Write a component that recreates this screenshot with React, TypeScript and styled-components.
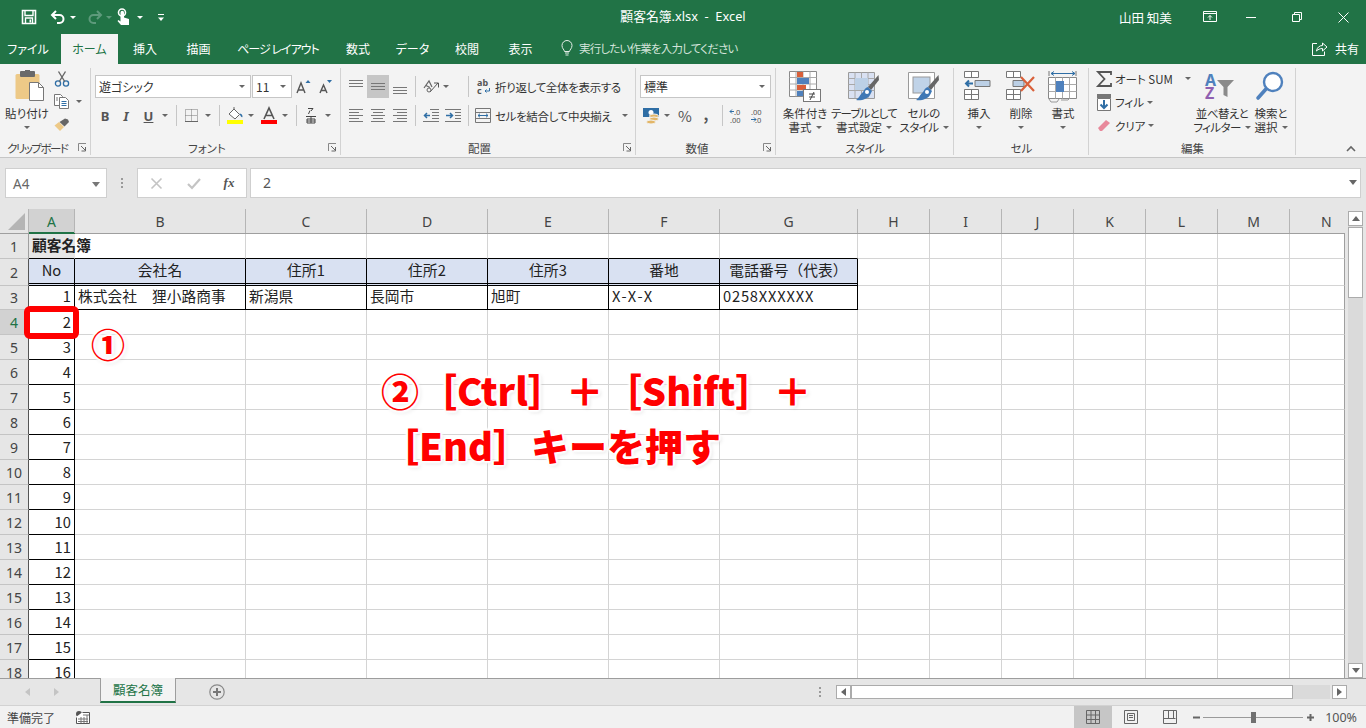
import React from 'react';
import styled, { createGlobalStyle } from 'styled-components';

const GlobalStyle = createGlobalStyle`
  html, body { margin: 0; padding: 0; height: 100%; overflow: hidden; }
  body { font-family: "Noto Sans", "Noto Sans CJK JP", sans-serif; }
  svg { display: block; overflow: visible; }
`;

const GREEN = '#217346';
const UI_FONT = '"Noto Sans CJK JP", "Noto Sans", sans-serif';

const Root = styled.div`
  position: relative;
  width: 1366px;
  height: 728px;
  display: flex;
  flex-direction: column;
  background: #e6e6e6;
  overflow: hidden;
  font-family: ${UI_FONT};
`;

/* ---------- title bar ---------- */
const TitleBar = styled.header`
  height: 34px;
  flex: none;
  background: ${GREEN};
  color: #fff;
  display: flex;
  align-items: center;
  position: relative;
`;

const QuickAccess = styled.div`
  display: flex;
  align-items: center;
  padding-left: 20px;
`;

const Title = styled.div`
  position: absolute;
  left: 0;
  right: 0;
  top: 7px;
  text-align: center;
  font-size: 12.8px;
  line-height: 18px;
  font-family: "Noto Sans", "Noto Sans CJK JP", sans-serif;
  white-space: pre;
`;

const WindowControls = styled.div`
  margin-left: auto;
  display: flex;
  align-items: center;
`;

const UserName = styled.span`
  font-size: 12.5px;
  width: 64px;
  margin-right: 9px;
  white-space: pre;
`;

const Slot = styled.span<{ $w: number; $on?: boolean; $h?: number; $ml?: number }>`
  flex: none;
  width: ${p => p.$w}px;
  height: ${p => p.$h ?? 23}px;
  margin-left: ${p => p.$ml ?? 0}px;
  display: inline-flex;
  align-items: center;
  justify-content: center;
  background: ${p => (p.$on ? '#c6c6c6' : 'transparent')};
`;

const Caret = styled.i<{ $c?: string }>`
  display: inline-block;
  width: 0;
  height: 0;
  border-left: 3px solid transparent;
  border-right: 3px solid transparent;
  border-top: 3px solid ${p => p.$c ?? '#666'};
  flex: none;
`;

const VSep = styled.span<{ $l?: number; $r?: number }>`
  flex: none;
  width: 1px;
  height: 21px;
  background: #c6c6c6;
  margin: 0 ${p => p.$r ?? 5}px 0 ${p => p.$l ?? 5}px;
`;

// squeezes the proportional kana to the narrower widths of the Windows UI font
const Squeeze = styled.span<{ $t: number }>`
  letter-spacing: ${p => p.$t}px;
  white-space: nowrap;
`;

/* ---------- tabs ---------- */
const TabBar = styled.nav`
  height: 30px;
  flex: none;
  background: ${GREEN};
  display: flex;
  align-items: stretch;
  color: #fff;
  font-size: 12px;
  font-feature-settings: "palt";
`;

const Tab = styled.div<{ $w: number; $active?: boolean }>`
  width: ${p => p.$w}px;
  flex: none;
  box-sizing: border-box;
  display: flex;
  align-items: center;
  justify-content: center;
  padding-bottom: 2px;
  background: ${p => (p.$active ? '#f3f3f3' : 'transparent')};
  color: ${p => (p.$active ? GREEN : '#fff')};
`;

const FileTab = styled(Tab)`
  padding-right: 5px;
`;

const TellMe = styled.div`
  display: flex;
  align-items: center;
  gap: 6px;
  margin-left: 14px;
  padding-bottom: 2px;
  color: #d3e3da;
  font-size: 11.5px;
  letter-spacing: -0.8px;
`;

const Share = styled.div`
  margin-left: auto;
  display: flex;
  align-items: center;
  gap: 7px;
  padding-right: 7px;
  padding-bottom: 2px;
`;

/* ---------- ribbon ---------- */
const Ribbon = styled.section`
  height: 93px;
  flex: none;
  background: #f3f3f3;
  border-bottom: 1px solid #c6c6c6;
  display: flex;
  position: relative;
  font-size: 11.5px;
  color: #333;
  font-feature-settings: "palt";
`;

const Group = styled.div<{ $w: number }>`
  width: ${p => p.$w}px;
  flex: none;
  display: flex;
  flex-direction: column;
  position: relative;
  &::after {
    content: '';
    position: absolute;
    right: 0;
    top: 4px;
    bottom: 2px;
    width: 1px;
    background: #d2d2d2;
  }
`;

const GroupBody = styled.div<{ $pl?: number; $pt?: number }>`
  height: 73px;
  padding-left: ${p => p.$pl ?? 0}px;
  padding-top: ${p => p.$pt ?? 0}px;
  box-sizing: border-box;
  display: flex;
`;

const GroupLabel = styled.div<{ $pr?: number; $pl?: number; $left?: boolean }>`
  height: 20px;
  line-height: 22px;
  text-align: ${p => (p.$left ? 'left' : 'center')};
  padding-right: ${p => p.$pr ?? 0}px;
  padding-left: ${p => p.$pl ?? 0}px;
  font-size: 11.5px;
  color: #444;
  position: relative;
`;

const Launcher = styled.span`
  position: absolute;
  right: 4px;
  top: 6px;
`;

const Stack = styled.div<{ $gap?: number; $w?: number; $pt?: number }>`
  display: flex;
  flex-direction: column;
  gap: ${p => p.$gap ?? 6}px;
  padding-top: ${p => p.$pt ?? 0}px;
  ${p => (p.$w ? `width: ${p.$w}px; flex: none;` : '')}
`;

const Row = styled.div<{ $gap?: number }>`
  display: flex;
  align-items: center;
  height: 23px;
  gap: ${p => p.$gap ?? 0}px;
`;

const TextCombo = styled.div<{ $w: number; $ml?: number }>`
  width: ${p => p.$w}px;
  height: 23px;
  margin-left: ${p => p.$ml ?? 0}px;
  box-sizing: border-box;
  flex: none;
  background: #fff;
  border: 1px solid #c6c6c6;
  display: flex;
  align-items: center;
  justify-content: space-between;
  padding: 0 5px 0 3px;
  font-size: 12px;
  color: #333;
`;

const LargeButton = styled.div<{ $w: number; $mt?: number }>`
  width: ${p => p.$w}px;
  flex: none;
  display: flex;
  flex-direction: column;
  align-items: center;
  padding-top: 6px;
  margin-top: ${p => p.$mt ?? 0}px;
  line-height: 14px;
  white-space: nowrap;
  & > svg { margin-bottom: 4px; }
`;

const LabelCaret = styled.span`
  display: inline-flex;
  align-items: center;
  gap: 4px;
  height: 14px;
`;

const WrapLabel = styled.span<{ $ml: number }>`
  margin-left: ${p => p.$ml}px;
  white-space: nowrap;
  letter-spacing: -0.33px;
`;

const ToolText = styled.span`
  white-space: nowrap;
  font-size: 11.5px;
`;

const FormatLetter = styled.span<{ $italic?: boolean; $under?: boolean }>`
  font-family: "Noto Sans", sans-serif;
  font-size: 13px;
  font-weight: 700;
  color: #555;
  font-style: ${p => (p.$italic ? 'italic' : 'normal')};
  text-decoration: ${p => (p.$under ? 'underline' : 'none')};
`;

const NumberMark = styled.span<{ $up?: boolean }>`
  font-size: 15px;
  color: #555;
  font-weight: ${p => (p.$up ? 700 : 400)};
  margin-top: ${p => (p.$up ? -4 : 0)}px;
`;

const Collapse = styled.span`
  position: absolute;
  right: 10px;
  bottom: 5px;
`;

/* ---------- formula bar ---------- */
const FormulaBar = styled.div`
  height: 30px;
  flex: none;
  padding: 10px 5px 11px;
  display: flex;
  align-items: stretch;
  color: #555;
`;

const NameBox = styled.div`
  width: 102px;
  box-sizing: border-box;
  background: #fff;
  border: 1px solid #cfcfcf;
  display: flex;
  align-items: center;
  justify-content: space-between;
  padding: 2px 6px 0 7px;
  font-size: 13.5px;
  color: #666;
  font-family: "Noto Sans", sans-serif;
`;

const Grip = styled.div`
  width: 30px;
  display: flex;
  flex-direction: column;
  align-items: center;
  justify-content: center;
  gap: 2px;
  & > i { width: 2px; height: 2px; background: #9a9a9a; display: block; }
`;

const FormulaButtons = styled.div`
  width: 110px;
  box-sizing: border-box;
  background: #fff;
  border: 1px solid #cfcfcf;
  display: flex;
  align-items: center;
`;

const FormulaInput = styled.div`
  flex: 1;
  margin-left: 3px;
  box-sizing: border-box;
  background: #fff;
  border: 1px solid #cfcfcf;
  display: flex;
  align-items: center;
  justify-content: space-between;
  padding: 0 3px 2px 12px;
  font-size: 14px;
  color: #555;
  font-family: "Noto Sans", sans-serif;
`;

/* ---------- sheet ---------- */
const SheetArea = styled.div`
  flex: 1;
  min-height: 0;
  display: flex;
  border-bottom: 1px solid #9d9d9d;
`;

const SheetGrid = styled.div`
  width: 1345px;
  flex: none;
  overflow: hidden;
  display: flex;
  flex-direction: column;
`;

const ColumnHeaderRow = styled.div`
  height: 25px;
  flex: none;
  display: flex;
  background: #e6e6e6;
  border-bottom: 1px solid #9f9f9f;
  box-sizing: border-box;
`;

const Corner = styled.div`
  width: 29px;
  flex: none;
  box-sizing: border-box;
  border-right: 1px solid #b5b5b5;
  display: flex;
  align-items: flex-end;
  justify-content: flex-end;
  padding: 0 3px 3px 0;
`;

const ColumnHead = styled.div<{ $w: number; $sel?: boolean; $cut?: boolean }>`
  width: ${p => p.$w}px;
  flex: none;
  box-sizing: border-box;
  border-right: ${p => (p.$cut ? '0' : '1px solid #b5b5b5')};
  display: flex;
  align-items: center;
  justify-content: ${p => (p.$cut ? 'flex-start' : 'center')};
  padding-left: ${p => (p.$cut ? 31 : 0)}px;
  font-family: "Noto Sans", sans-serif;
  font-size: 14px;
  color: ${p => (p.$sel ? GREEN : '#444')};
  background: ${p => (p.$sel ? '#d2d2d2' : 'transparent')};
  box-shadow: ${p => (p.$sel ? `inset 0 -1px 0 ${GREEN}, 0 1px 0 ${GREEN}` : 'none')};
`;

const SheetRow = styled.div<{ $h: number }>`
  height: ${p => p.$h}px;
  flex: none;
  display: flex;
`;

const RowHead = styled.div<{ $sel?: boolean; $dark?: boolean }>`
  width: 29px;
  flex: none;
  box-sizing: border-box;
  background: ${p => (p.$sel ? '#d2d2d2' : '#e6e6e6')};
  border-right: 1px solid ${p => (p.$dark ? '#555' : '#9f9f9f')};
  border-bottom: 1px solid #c4c4c4;
  color: ${p => (p.$sel ? GREEN : '#444')};
  display: flex;
  align-items: center;
  justify-content: center;
  font-family: "Noto Sans", sans-serif;
  font-size: 14px;
`;

const Cell = styled.div<{
  $w: number;
  $align?: string;
  $title?: boolean;
  $fill?: boolean;
  $edge?: 'black' | 'head';
  $frame?: boolean;
  $blackBottom?: boolean;
  $track?: number;
  $pb?: number;
}>`
  width: ${p => p.$w}px;
  flex: none;
  box-sizing: border-box;
  padding: 0 3px ${p => p.$pb ?? 1}px 3px;
  display: flex;
  align-items: center;
  justify-content: ${p => p.$align ?? 'flex-start'};
  white-space: nowrap;
  font-family: "Noto Sans CJK JP", sans-serif;
  font-size: 14.7px;
  letter-spacing: ${p => p.$track ?? 0.1}px;
  font-weight: ${p => (p.$title ? 700 : 400)};
  color: #222;
  position: ${p => (p.$title ? 'relative' : 'static')};
  z-index: ${p => (p.$title ? 1 : 'auto')};
  background: ${p => (p.$title ? 'transparent' : p.$fill ? '#d9e1f2' : '#fff')};
  border-right: 1px solid ${p => {
    if (p.$title) return 'transparent';
    if (p.$edge) return '#000';
    return p.$frame ? '#9f9f9f' : '#d4d4d4';
  }};
  border-bottom: ${p =>
    p.$edge === 'head'
      ? '3px double #000'
      : p.$edge === 'black' || p.$blackBottom
        ? '1px solid #000'
        : '1px solid #d4d4d4'};
`;

const VScroll = styled.div`
  width: 15px;
  margin-left: 3px;
  padding-top: 2px;
  display: flex;
  flex-direction: column;
  background: #e6e6e6;
`;

const VTrack = styled.div`
  flex: 1;
  background: #dadada;
  padding-top: 1px;
`;

const ScrollButton = styled.div<{ $h?: number; $ml?: number }>`
  width: 15px;
  height: ${p => p.$h ?? 15}px;
  margin-left: ${p => p.$ml ?? 0}px;
  flex: none;
  box-sizing: border-box;
  background: #fff;
  border: 1px solid #ababab;
  display: flex;
  align-items: center;
  justify-content: center;
`;

const VThumb = styled.div`
  height: 71px;
  box-sizing: border-box;
  background: #fff;
  border: 1px solid #ababab;
`;

/* ---------- sheet tabs ---------- */
const SheetTabs = styled.div`
  height: 27px;
  flex: none;
  display: flex;
  align-items: flex-start;
  background: #e6e6e6;
  border-bottom: 1px solid #d2d2d2;
  box-sizing: border-box;
`;

const TabNav = styled.div`
  width: 100px;
  height: 25px;
  flex: none;
  display: flex;
  align-items: center;
  padding-left: 25px;
  gap: 24px;
  box-sizing: border-box;
`;

const SheetTab = styled.div`
  width: 76px;
  height: 25px;
  margin-top: -1px;
  flex: none;
  box-sizing: border-box;
  background: #f3f3f3;
  border-left: 1px solid #9d9d9d;
  border-right: 1px solid #9d9d9d;
  border-bottom: 2px solid ${GREEN};
  color: ${GREEN};
  font-size: 12.5px;
  display: flex;
  align-items: center;
  justify-content: center;
`;

const AddSheet = styled.div`
  margin-left: 33px;
  height: 25px;
  display: flex;
  align-items: center;
`;

const HScrollWrap = styled.div`
  margin-left: auto;
  margin-right: 19px;
  height: 25px;
  display: flex;
  align-items: center;
`;

const HGrip = styled(Grip)`
  width: 16px;
  margin-right: 8px;
`;

const HTrack = styled.div`
  width: 479px;
  height: 14px;
  background: #dadada;
  display: flex;
`;

const HThumb = styled.div`
  width: 442px;
  box-sizing: border-box;
  background: #fff;
  border: 1px solid #ababab;
`;

/* ---------- status bar ---------- */
const StatusBar = styled.footer`
  height: 22px;
  flex: none;
  background: #f1f1f1;
  display: flex;
  align-items: center;
  font-size: 12px;
  color: #444;
  padding-left: 7px;
`;

const StatusRight = styled.div`
  margin-left: auto;
  height: 22px;
  display: flex;
  align-items: center;
`;

const ViewButton = styled.div<{ $on?: boolean }>`
  width: 38.5px;
  height: 22px;
  display: flex;
  align-items: center;
  justify-content: center;
  background: ${p => (p.$on ? '#c6c6c6' : 'transparent')};
`;

const ZoomSlider = styled.div`
  width: 100px;
  height: 1px;
  background: #9a9a9a;
  position: relative;
`;

const ZoomThumb = styled.span`
  position: absolute;
  left: 48px;
  top: -5px;
  width: 5px;
  height: 11px;
  background: #707070;
`;

const ZoomText = styled.span`
  font-family: "Noto Sans", sans-serif;
  font-size: 12.5px;
  color: #555;
  width: 49px;
  text-align: right;
  padding-right: 9px;
  box-sizing: border-box;
`;

/* ---------- annotations over the sheet ---------- */
const Marker = styled.div`
  position: absolute;
  left: 24px;
  top: 306px;
  width: 55px;
  height: 33px;
  box-sizing: border-box;
  border: 6px solid #ff0000;
  border-radius: 6px;
`;

const halo = `
  0 0 4px #fff, 0 0 4px #fff, 1px 1px 2px #fff, -1px -1px 2px #fff, 2px 0 2px #fff,
  -2px 0 2px #fff, 0 2px 2px #fff, 0 -2px 2px #fff, 2px 2px 4px rgba(0,0,0,.15)
`;

const Callout = styled.div<{ $x: number; $y: number; $size: number }>`
  position: absolute;
  left: ${p => p.$x}px;
  top: ${p => p.$y}px;
  font-family: "Noto Sans CJK JP", sans-serif;
  font-weight: 900;
  font-size: ${p => p.$size}px;
  line-height: 1.2;
  color: #ff0000;
  white-space: pre;
  text-shadow: ${halo};
`;

/* ---------- icons ---------- */
const Svg: React.FC<{ w?: number; h?: number; children: React.ReactNode }> = ({ w = 16, h, children }) => (
  <svg width={w} height={h ?? w} viewBox={`0 0 ${w} ${h ?? w}`} fill="none">{children}</svg>
);

const SaveIcon = () => (
  <Svg>
    <path d="M1.5 1.5h13v13h-13z" stroke="#fff" strokeWidth="1.6" />
    <path d="M4 2v4.5h8V2" stroke="#fff" strokeWidth="1.4" />
    <path d="M4.5 14v-5h7v5" stroke="#fff" strokeWidth="1.4" />
    <rect x="8.5" y="10.5" width="1.6" height="3" fill="#fff" />
  </Svg>
);
const UndoIcon = () => (
  <Svg>
    <path d="M6 2 2 6l4 4" stroke="#fff" strokeWidth="2" />
    <path d="M3 6h6.5a4 4 0 0 1 0 8H7" stroke="#fff" strokeWidth="2" />
  </Svg>
);
const RedoIcon = () => (
  <Svg>
    <path d="M10 2l4 4-4 4" stroke="#5d9a7b" strokeWidth="2" />
    <path d="M13 6H6.5a4 4 0 0 0 0 8H9" stroke="#5d9a7b" strokeWidth="2" />
  </Svg>
);
const TouchIcon = () => (
  <Svg w={16} h={18}>
    <circle cx="6" cy="4.5" r="3.5" stroke="#fff" strokeWidth="1.6" />
    <path d="M4.5 4.5v9l-2-1.5-1 1 3.5 4h8v-6l-5-1.5V4.5a1.2 1.2 0 0 0-3.5 0z" fill="#fff" />
  </Svg>
);
const CustomizeIcon = () => (
  <Svg w={8} h={9}>
    <path d="M1 1.5h6" stroke="#fff" />
    <path d="M1 4.5h6L4 8z" fill="#fff" />
  </Svg>
);
const RibbonDisplayIcon = () => (
  <Svg w={14} h={12}>
    <path d="M.5.5h13v10H.5z" stroke="#fff" />
    <path d="M1 2.5h12" stroke="#fff" />
    <path d="M7 9V4.5M5 6.5l2-2 2 2" stroke="#fff" />
  </Svg>
);
const MinIcon = () => <Svg w={10} h={10}><path d="M0 5.5h10" stroke="#fff" /></Svg>;
const RestoreIcon = () => (
  <Svg w={10} h={10}>
    <path d="M.5 2.5h7v7h-7z" stroke="#fff" />
    <path d="M2.5 2.5v-2h7v7h-2" stroke="#fff" />
  </Svg>
);
const CloseIcon = () => <Svg w={11} h={11}><path d="M.5.5l10 10M10.5.5l-10 10" stroke="#fff" /></Svg>;
const BulbIcon = () => (
  <Svg w={12} h={16}>
    <path d="M3.5 11.5C3.2 9.5 1 8.5 1 5.5a5 5 0 0 1 10 0c0 3-2.2 4-2.5 6z" stroke="#e6efe9" />
    <path d="M4 13h4M4.5 15h3" stroke="#e6efe9" />
  </Svg>
);
const ShareIcon = () => (
  <Svg w={16} h={15}>
    <path d="M5 2.5H.5v12h12v-4" stroke="#fff" />
    <path d="M4.5 10c.5-3.5 3-5.5 6-5.5V2l4.5 4-4.5 4V7.5c-2.5 0-4.5 1-6 2.5z" stroke="#fff" />
  </Svg>
);

const PasteIcon = () => (
  <Svg w={36} h={32}>
    <g transform="translate(6 0)">
      <rect x="0.5" y="4" width="24" height="25" rx="1.5" fill="#edc987" />
      <rect x="5" y="1" width="15" height="6" rx="1" fill="#6a6a6a" />
      <rect x="10" y="0" width="5" height="3" fill="#6a6a6a" />
      <path d="M14.5 12.5h9l5 5v13h-14z" fill="#fff" stroke="#777" />
      <path d="M23.5 12.5v5h5" stroke="#777" />
    </g>
  </Svg>
);
const CutIcon = () => (
  <Svg w={16} h={16}>
    <circle cx="4" cy="12.5" r="2.6" stroke="#2f6ea5" strokeWidth="1.3" />
    <circle cx="12" cy="12.5" r="2.6" stroke="#2f6ea5" strokeWidth="1.3" />
    <path d="M5.3 10.5 11.5.5M10.7 10.5 4.5.5" stroke="#666" strokeWidth="1.4" />
  </Svg>
);
const CopyIcon = () => (
  <Svg w={16} h={15}>
    <path d="M.5.5h6l2 2v9h-8z" fill="#fff" stroke="#777" />
    <path d="M5.5 3.5h6l3 3v8h-9z" fill="#fff" stroke="#777" />
    <path d="M7.5 7.5h5M7.5 9.5h5M7.5 11.5h5" stroke="#2f6ea5" />
    <path d="M2 4h2M2 6h2" stroke="#777" />
  </Svg>
);
const BrushIcon = () => (
  <Svg w={16} h={15}>
    <path d="M.5 8.5 6 14l4-4-5-5z" fill="#edc987" />
    <path d="M5.5 5 11 1.5l3 1L15 5l-4.5 4.5z" fill="#666" />
  </Svg>
);
const GrowIcon = ({ up }: { up?: boolean }) => (
  <Svg w={up ? 15 : 13} h={14}>
    <path d={up ? 'M1 13 5 3l4 10M2.5 10h5' : 'M1 13 4.5 5 8 13M2.3 10.5h4.4'} stroke="#555" strokeWidth="1.4" />
    {up ? <path d="M9.5 3l2.5-3 2.5 3z" fill="#2f6ea5" /> : <path d="M8 0h5l-2.5 3z" fill="#2f6ea5" />}
  </Svg>
);
const BorderIcon = () => (
  <Svg w={13} h={13}>
    <path d="M.5.5h12v12H.5zM6.5.5v12M.5 6.5h12" stroke="#777" strokeDasharray="1 1" />
    <path d="M0 12.5h13" stroke="#666" />
  </Svg>
);
const FillIcon = () => (
  <Svg w={17} h={17}>
    <path d="M2 7l5-5 5.5 5.5-4.5 4.5z" fill="#fff" stroke="#666" />
    <path d="M7 2V0" stroke="#666" />
    <path d="M12.5 6.5c1.5 0 3 1 3 3s-2 0-3-3z" fill="#2f6ea5" />
    <rect x="0" y="13" width="16" height="4" fill="#ffff00" />
  </Svg>
);
const FontColorIcon = () => (
  <Svg w={16} h={17}>
    <path d="M3 12 8 1l5 11M4.8 8.5h6.4" stroke="#555" strokeWidth="1.6" />
    <rect x="0" y="13" width="16" height="4" fill="#ff0000" />
  </Svg>
);
const PhoneticIcon = () => (
  <Svg w={12} h={17}>
    <path d="M3 1.5h5L6 4M5 3.5 3.5 7" stroke="#444" />
    <path d="M1 9.5h10M2 12h8v4H2zM6 9.5v6.5M2 14h8" stroke="#444" />
  </Svg>
);
const Lines = ({ xs, y0 = 0 }: { xs: [number, number][]; y0?: number }) => (
  <Svg w={15} h={14}>
    {xs.map(([a, b], i) => (
      <path key={i} d={`M${a} ${y0 + i * 3 + 0.5}H${b}`} stroke="#777" />
    ))}
  </Svg>
);
const OrientIcon = () => (
  <Svg w={17} h={15}>
    <path d="M1 9l5-7 3 6M3 6.5l4 2" stroke="#666" strokeWidth="1.2" />
    <path d="M7 13 15 4" stroke="#555" />
    <path d="M11 4h4.5v4.5" stroke="#555" />
    <circle cx="6" cy="11" r="2" stroke="#666" />
  </Svg>
);
const IndentIcon = ({ out }: { out?: boolean }) => (
  <Svg w={16} h={13}>
    <path d={out ? 'M7 .5h9M9 3.5h7M9 6.5h7M9 9.5h7M0 12.5h16' : 'M0 .5h16M10 3.5h6M10 6.5h6M10 9.5h6M0 12.5h16'} stroke="#777" />
    {out
      ? <path d="M7 6.5H2M4 4 1.5 6.5 4 9" stroke="#2f6ea5" strokeWidth="1.5" />
      : <path d="M1 6.5h6M5 4l2.5 2.5L5 9" stroke="#2f6ea5" strokeWidth="1.5" />}
  </Svg>
);
const WrapIcon = () => (
  <Svg w={14} h={15}>
    <text x="0" y="7" fontSize="9" fontWeight="700" fill="#555" fontFamily="Noto Sans">ab</text>
    <text x="0" y="15" fontSize="9" fontWeight="700" fill="#555" fontFamily="Noto Sans">c</text>
    <path d="M12.5 9v3H8M9.5 10.5 8 12l1.5 1.5" stroke="#2f6ea5" />
  </Svg>
);
const MergeIcon = () => (
  <Svg w={16} h={15}>
    <path d="M.5.5h15v14H.5zM.5 4.5h15M.5 10.5h15" stroke="#777" />
    <path d="M3 7.5h10M5 5.7 3 7.5l2 1.8M11 5.7l2 1.8-2 1.8" stroke="#2f6ea5" />
  </Svg>
);
const CurrencyIcon = () => (
  <Svg w={17} h={17}>
    <rect x="0" y="1" width="16" height="9" fill="#2f6ea5" />
    <circle cx="8" cy="5.5" r="2.5" fill="#fff" />
    <ellipse cx="11" cy="9" rx="4.5" ry="2" fill="#e3b667" stroke="#f3f3f3" />
    <ellipse cx="11" cy="12" rx="4.5" ry="2" fill="#e3b667" stroke="#f3f3f3" />
    <ellipse cx="8" cy="15" rx="4.5" ry="2" fill="#e3b667" stroke="#f3f3f3" />
  </Svg>
);
const DecimalIcon = ({ more }: { more?: boolean }) => (
  <Svg w={17} h={15}>
    <text x={more ? 5 : 1} y="6.5" fontSize="7.5" fill="#555" fontFamily="Noto Sans">{more ? '.0' : '.00'}</text>
    <text x={more ? 1 : 5} y="14.5" fontSize="7.5" fill="#555" fontFamily="Noto Sans">{more ? '.00' : '.0'}</text>
    {more
      ? <path d="M5 3.5H1M3 1.5l-2 2 2 2" stroke="#2f6ea5" />
      : <path d="M1 11.5h5M4 9.5l2 2-2 2" stroke="#2f6ea5" />}
  </Svg>
);
const CondFormatIcon = () => (
  <Svg w={32} h={32}>
    <path d="M.5 1.5h27v25H.5z" fill="#fff" stroke="#8a8a8a" />
    <path d="M7 1.5v25M14 1.5v25M21 1.5v25M.5 7.5h27M.5 14h27M.5 20h27" stroke="#aaa" />
    <rect x="8" y="2" width="6" height="5" fill="#d9603a" />
    <rect x="8" y="8" width="12" height="6" fill="#4f81bd" />
    <rect x="8" y="15" width="9" height="5" fill="#d9603a" />
    <rect x="8" y="21" width="6" height="5" fill="#4f81bd" />
    <rect x="14.5" y="19.5" width="17" height="12" fill="#fff" stroke="#777" />
    <path d="M20 24h6M20 27h6M25 22l-4 8" stroke="#444" />
  </Svg>
);
const TableFormatIcon = ({ single }: { single?: boolean }) => (
  <Svg w={32} h={32}>
    <path d="M.5 2.5h26v26H.5z" fill="#fff" stroke="#9a9a9a" />
    {single ? (
      <rect x="5" y="7" width="17" height="16" fill="#c0d3e8" stroke="#9a9a9a" />
    ) : (
      <>
        <rect x="1" y="3" width="25" height="25" fill="#d9e1f2" />
        <path d="M7 2.5v26M13.5 2.5v26M20 2.5v26M.5 8.5h26M.5 14.5h26M.5 20.5h26" stroke="#a8a8a8" />
        <rect x="7" y="8" width="13" height="12" fill="#bcd0e6" />
      </>
    )}
    <path d="M30.5 5 20 17l3 3 8-10z" fill="#666" />
    <path d="M20 17c-4 1-4 5-6 6-2 2-4 6-6 7 5 1 12-1 14-5l2-4z" fill="#3f78b5" />
    <circle cx="19" cy="22" r="2" fill="#fff" />
  </Svg>
);
const CellsIcon = ({ kind }: { kind: 'ins' | 'del' | 'fmt' }) => {
  if (kind === 'fmt') {
    return (
      <Svg w={30} h={32}>
        <path d="M1 1v5M28 1v5" stroke="#777" />
        <path d="M3 3.5h24M6 1.5 3 3.5l3 2M24 1.5l3 2-3 2" stroke="#2f6ea5" />
        <path d="M.5 7.5h28v21H.5z" fill="#fff" stroke="#888" />
        <path d="M7.5 7.5v21M14.5 7.5v21M21.5 7.5v21M.5 14.5h28M.5 21.5h28" stroke="#aaa" />
        <rect x="8" y="11" width="8" height="11" fill="#4f81bd" />
        <path d="M1 29l2 3h6l2-3M13 30h7l2-2" stroke="#999" />
      </Svg>
    );
  }
  const del = kind === 'del';
  return (
    <Svg w={30} h={32}>
      <path d="M.5 1.5h14v6H.5zM7.5 1.5v6M.5 19.5h14v10H.5zM7.5 19.5v10M.5 24.5h14" stroke="#777" fill="#fff" />
      <path d={del ? 'M7 10.5h11v6H7z' : 'M11 10.5h15v6H11z'} stroke="#777" fill="#bcd0e6" />
      {del ? (
        <path d="M15 7l13 14M28 7 15 21" stroke="#d9603a" strokeWidth="2.2" />
      ) : (
        <path d="M9 13.5H2M5 10.5l-3 3 3 3" stroke="#2f6ea5" strokeWidth="2" />
      )}
    </Svg>
  );
};
const SigmaIcon = () => (
  <Svg w={16} h={16}>
    <path d="M15 4V1H2l6.5 7L2 15h13v-3" stroke="#555" strokeWidth="1.8" />
  </Svg>
);
const FillDownIcon = () => (
  <Svg w={15} h={17}>
    <path d="M.5 4.5h13v12H.5z" fill="#fff" stroke="#777" />
    <rect x="0" y="0" width="14" height="4" fill="#777" />
    <path d="M7 6v8M3.5 10.5 7 14l3.5-3.5" stroke="#2f6ea5" strokeWidth="2" />
  </Svg>
);
const EraserIcon = () => (
  <Svg w={14} h={13}>
    <path d="M1 9l8-8 4 3-8 8H3z" fill="#e8899b" />
  </Svg>
);
const SortIcon = () => (
  <Svg w={30} h={32}>
    <text x="-2" y="16" fontSize="16" fontWeight="700" fill="#4f81bd" fontFamily="Noto Sans">A</text>
    <text x="-2" y="29" fontSize="16" fontWeight="700" fill="#8f5fb0" fontFamily="Noto Sans">Z</text>
    <path d="M10 10h17l-6.5 7v10l-4-2v-8z" fill="#8a8a8a" />
  </Svg>
);
const FindIcon = () => (
  <Svg w={30} h={32}>
    <circle cx="17" cy="12" r="9" fill="#fff" stroke="#4f81bd" strokeWidth="2.4" />
    <path d="M10 19 2 28" stroke="#4f81bd" strokeWidth="3.6" strokeLinecap="round" />
  </Svg>
);
const LauncherIcon = () => (
  <Svg w={9} h={9}>
    <path d="M.5 8V.5H8" stroke="#888" />
    <path d="M3 3l4 4M7.5 4v4h-4" stroke="#666" />
  </Svg>
);
const CollapseIcon = () => <Svg w={10} h={6}><path d="M1 5l4-4 4 4" stroke="#666" strokeWidth="1.6" /></Svg>;
const CornerTriangle = () => <Svg w={17} h={17}><path d="M17 0v17H0z" fill="#b5b5b5" /></Svg>;
const PlusCircle = () => (
  <Svg w={16} h={16}>
    <circle cx="8" cy="8" r="7.2" stroke="#8a8a8a" strokeWidth="1.2" />
    <path d="M8 4v8M4 8h8" stroke="#777" strokeWidth="2" />
  </Svg>
);
const Tri = ({ dir, c = '#777', s = 5 }: { dir: 'l' | 'r' | 'u' | 'd'; c?: string; s?: number }) => {
  const d = { l: 'M0 4 5 0v8z', r: 'M5 4 0 0v8z', u: 'M4 0 8 5H0z', d: 'M4 5 0 0h8z' }[dir];
  const horiz = dir === 'l' || dir === 'r';
  return <svg width={horiz ? s : 8} height={horiz ? 8 : s} viewBox={horiz ? '0 0 5 8' : '0 0 8 5'}><path d={d} fill={c} /></svg>;
};
const MacroIcon = () => (
  <Svg w={14} h={13}>
    <circle cx="3" cy="3" r="3" fill="#555" />
    <path d="M6 1.5h8V13H0V6" fill="#fff" />
    <path d="M6.5 1.5h7v11H.5v-6" stroke="#555" />
    <path d="M2 8h10M2 10.5h10M5 6v6M8 6v6M11 4v8M7 4h6" stroke="#777" />
  </Svg>
);
const NormalView = () => (
  <Svg w={14} h={14}>
    <path d="M.5.5h13v13H.5zM5 .5v13M9.5.5v13M.5 5h13M.5 9.5h13" stroke="#666" />
  </Svg>
);
const PageView = () => (
  <Svg w={14} h={14}>
    <path d="M.5.5h13v13H.5z" stroke="#666" />
    <path d="M3.5 3.5h7v7h-7zM5 5.5h4M5 7.5h4" stroke="#666" />
  </Svg>
);
const BreakView = () => (
  <Svg w={14} h={14}>
    <path d="M.5.5h13v13H.5zM.5 8.5h12M5.5.5v8M10.5.5v8" stroke="#666" />
  </Svg>
);
const SmallSign = ({ plus }: { plus?: boolean }) => (
  <Svg w={7} h={7}>
    <path d={plus ? 'M0 3.5h7M3.5 0v7' : 'M0 3.5h7'} stroke="#666" strokeWidth="2" />
  </Svg>
);
const CrossMark = () => <Svg w={11} h={11}><path d="M.5.5l10 10M10.5.5l-10 10" stroke="#c4c4c4" strokeWidth="1.6" /></Svg>;
const CheckMark = () => <Svg w={14} h={11}><path d="M1 6l4 4 8-9" stroke="#c4c4c4" strokeWidth="2.2" /></Svg>;
const FxMark = styled.span`
  font-family: "Liberation Serif", serif;
  font-style: italic;
  font-weight: 700;
  font-size: 13px;
  color: #555;
`;

/* ---------- sheet data ---------- */
const COLUMNS: [string, number][] = [
  ['A', 46], ['B', 171], ['C', 121], ['D', 121], ['E', 121], ['F', 111], ['G', 138],
  ['H', 72], ['I', 72], ['J', 72], ['K', 72], ['L', 72], ['M', 72], ['N', 55],
];

const HEADINGS = ['No', '会社名', '住所1', '住所2', '住所3', '番地', '電話番号（代表）'];
const FIRST_ROW = ['1', '株式会社　狸小路商事', '新潟県', '長岡市', '旭町', 'X-X-X', '0258XXXXXX'];
const LATIN_TRACK: Record<number, number> = { 5: 1.6, 6: 0.8 };

const rowHeight = (r: number) => (r === 2 ? 27 : r === 3 ? 24 : 25);

const renderCell = (r: number, c: number, w: number) => {
  const inTable = c < 7;
  const frame = c === COLUMNS.length - 1;
  if (r === 1 && c === 0) {
    return <Cell key={c} $w={w} $title $blackBottom $pb={4}>顧客名簿</Cell>;
  }
  if (r === 1) {
    return <Cell key={c} $w={w} $frame={frame} $blackBottom={inTable} />;
  }
  if (r === 2 && inTable) {
    return <Cell key={c} $w={w} $fill $edge="head" $align="center" $pb={3}>{HEADINGS[c]}</Cell>;
  }
  if (r === 3 && inTable) {
    return (
      <Cell key={c} $w={w} $edge="black" $pb={4} $track={LATIN_TRACK[c]} $align={c === 0 ? 'flex-end' : 'flex-start'}>
        {FIRST_ROW[c]}
      </Cell>
    );
  }
  if (c === 0 && r > 3) {
    return <Cell key={c} $w={w} $edge="black" $align="flex-end">{r - 2}</Cell>;
  }
  return <Cell key={c} $w={w} $frame={frame} />;
};

const GROUP_WIDTHS = { clip: 91, font: 250, align: 295, num: 140, style: 178, cell: 135, edit: 207 };

const App: React.FC = () => (
  <Root>
    <GlobalStyle />

    <TitleBar>
      <QuickAccess>
        <Slot $w={18}><SaveIcon /></Slot>
        <Slot $w={22} $ml={9}><UndoIcon /></Slot>
        <Slot $w={8}><Caret $c="#fff" /></Slot>
        <Slot $w={20} $ml={8}><RedoIcon /></Slot>
        <Slot $w={8}><Caret $c="#5d9a7b" /></Slot>
        <Slot $w={22}><TouchIcon /></Slot>
        <Slot $w={10}><Caret $c="#fff" /></Slot>
        <Slot $w={32}><CustomizeIcon /></Slot>
      </QuickAccess>
      <Title>{'顧客名簿.xlsx  -  Excel'}</Title>
      <WindowControls>
        <UserName>山田 知美</UserName>
        <Slot $w={36}><RibbonDisplayIcon /></Slot>
        <Slot $w={46}><MinIcon /></Slot>
        <Slot $w={46}><RestoreIcon /></Slot>
        <Slot $w={46}><CloseIcon /></Slot>
      </WindowControls>
    </TitleBar>

    <TabBar>
      <FileTab $w={61}>ファイル</FileTab>
      <Tab $w={57} $active>ホーム</Tab>
      <Tab $w={54}>挿入</Tab>
      <Tab $w={53}>描画</Tab>
      <Tab $w={106}><Squeeze $t={-1}>ページ レイアウト</Squeeze></Tab>
      <Tab $w={54}>数式</Tab>
      <Tab $w={55}>データ</Tab>
      <Tab $w={54}>校閲</Tab>
      <Tab $w={53}>表示</Tab>
      <TellMe><BulbIcon />実行したい作業を入力してください</TellMe>
      <Share><ShareIcon />共有</Share>
    </TabBar>

    <Ribbon>
      <Group $w={GROUP_WIDTHS.clip}>
        <GroupBody>
          <LargeButton $w={54}>
            <PasteIcon />
            <span>貼り付け</span>
            <LabelCaret><Caret /></LabelCaret>
          </LargeButton>
          <Stack $gap={0} $pt={3}>
            <Row><Slot $w={16}><CutIcon /></Slot></Row>
            <Row><Slot $w={16}><CopyIcon /></Slot><Slot $w={17}><Caret /></Slot></Row>
            <Row><Slot $w={16}><BrushIcon /></Slot></Row>
          </Stack>
        </GroupBody>
        <GroupLabel $left $pl={7}>
          <Squeeze $t={-1.5}>クリップボード</Squeeze>
          <Launcher><LauncherIcon /></Launcher>
        </GroupLabel>
      </Group>

      <Group $w={GROUP_WIDTHS.font}>
        <GroupBody $pl={4} $pt={11}>
          <Stack>
            <Row>
              <TextCombo $w={156}>遊ゴシック<Caret /></TextCombo>
              <TextCombo $w={40} $ml={1}>11<Caret /></TextCombo>
              <Slot $w={22}><GrowIcon up /></Slot>
              <Slot $w={22}><GrowIcon /></Slot>
            </Row>
            <Row>
              <Slot $w={20}><FormatLetter>B</FormatLetter></Slot>
              <Slot $w={22}><FormatLetter $italic>I</FormatLetter></Slot>
              <Slot $w={23}><FormatLetter $under>U</FormatLetter></Slot>
              <Slot $w={10}><Caret /></Slot>
              <VSep $l={6} />
              <Slot $w={18}><BorderIcon /></Slot>
              <Slot $w={16}><Caret /></Slot>
              <VSep $l={3} />
              <Slot $w={20}><FillIcon /></Slot>
              <Slot $w={12}><Caret /></Slot>
              <Slot $w={24}><FontColorIcon /></Slot>
              <Slot $w={8}><Caret /></Slot>
              <VSep $l={7} />
              <Slot $w={18}><PhoneticIcon /></Slot>
              <Slot $w={16}><Caret /></Slot>
            </Row>
          </Stack>
        </GroupBody>
        <GroupLabel $pr={18}>
          フォント
          <Launcher><LauncherIcon /></Launcher>
        </GroupLabel>
      </Group>

      <Group $w={GROUP_WIDTHS.align}>
        <GroupBody $pl={4} $pt={11}>
          <Stack>
            <Row>
              <Slot $w={22}><Lines xs={[[0, 14], [0, 14], [0, 14]]} y0={0} /></Slot>
              <Slot $w={22} $on><Lines xs={[[0, 14], [0, 14], [0, 14]]} y0={3} /></Slot>
              <Slot $w={22}><Lines xs={[[0, 14], [0, 14], [0, 14]]} y0={7} /></Slot>
              <VSep $l={4} $r={4} />
              <Slot $w={22}><OrientIcon /></Slot>
              <Slot $w={8}><Caret /></Slot>
              <VSep $l={18} $r={6} />
              <Slot $w={18}><WrapIcon /></Slot>
              <WrapLabel $ml={2}>折り返して全体を表示する</WrapLabel>
            </Row>
            <Row>
              <Slot $w={22}><Lines xs={[[0, 14], [0, 10], [0, 14], [0, 10], [0, 14]]} /></Slot>
              <Slot $w={22}><Lines xs={[[0, 14], [2, 12], [0, 14], [2, 12], [0, 14]]} /></Slot>
              <Slot $w={22}><Lines xs={[[0, 14], [4, 14], [0, 14], [4, 14], [0, 14]]} /></Slot>
              <VSep $l={4} $r={4} />
              <Slot $w={22}><IndentIcon out /></Slot>
              <Slot $w={22}><IndentIcon /></Slot>
              <VSep $l={4} $r={6} />
              <Slot $w={16}><MergeIcon /></Slot>
              <WrapLabel $ml={4}>セルを結合して中央揃え</WrapLabel>
              <Slot $w={26}><Caret /></Slot>
            </Row>
          </Stack>
        </GroupBody>
        <GroupLabel $pr={18}>
          配置
          <Launcher><LauncherIcon /></Launcher>
        </GroupLabel>
      </Group>

      <Group $w={GROUP_WIDTHS.num}>
        <GroupBody $pl={4} $pt={11}>
          <Stack>
            <Row><TextCombo $w={131}>標準<Caret /></TextCombo></Row>
            <Row>
              <Slot $w={22}><CurrencyIcon /></Slot>
              <Slot $w={10}><Caret /></Slot>
              <Slot $w={26}><NumberMark>%</NumberMark></Slot>
              <Slot $w={16}><NumberMark $up>,</NumberMark></Slot>
              <VSep $l={8} $r={4} />
              <Slot $w={20}><DecimalIcon more /></Slot>
              <Slot $w={22}><DecimalIcon /></Slot>
            </Row>
          </Stack>
        </GroupBody>
        <GroupLabel $pr={18}>
          数値
          <Launcher><LauncherIcon /></Launcher>
        </GroupLabel>
      </Group>

      <Group $w={GROUP_WIDTHS.style}>
        <GroupBody $pl={4}>
          <LargeButton $w={50}>
            <CondFormatIcon />
            <span>条件付き</span>
            <LabelCaret>書式<Caret /></LabelCaret>
          </LargeButton>
          <LargeButton $w={68}>
            <TableFormatIcon />
            <Squeeze $t={-0.85}>テーブルとして</Squeeze>
            <LabelCaret>書式設定<Caret /></LabelCaret>
          </LargeButton>
          <LargeButton $w={52}>
            <TableFormatIcon single />
            <span>セルの</span>
            <LabelCaret><Squeeze $t={-0.5}>スタイル</Squeeze><Caret /></LabelCaret>
          </LargeButton>
        </GroupBody>
        <GroupLabel><Squeeze $t={-0.5}>スタイル</Squeeze></GroupLabel>
      </Group>

      <Group $w={GROUP_WIDTHS.cell}>
        <GroupBody $pl={4}>
          <LargeButton $w={42}>
            <CellsIcon kind="ins" />
            <span>挿入</span>
            <LabelCaret><Caret /></LabelCaret>
          </LargeButton>
          <LargeButton $w={42}>
            <CellsIcon kind="del" />
            <span>削除</span>
            <LabelCaret><Caret /></LabelCaret>
          </LargeButton>
          <LargeButton $w={42}>
            <CellsIcon kind="fmt" />
            <span>書式</span>
            <LabelCaret><Caret /></LabelCaret>
          </LargeButton>
        </GroupBody>
        <GroupLabel>セル</GroupLabel>
      </Group>

      <Group $w={GROUP_WIDTHS.edit}>
        <GroupBody $pl={7} $pt={3}>
          <Stack $gap={0.5} $w={98}>
            <Row $gap={3}><Slot $w={16}><SigmaIcon /></Slot><ToolText>オート SUM</ToolText><Slot $w={24}><Caret /></Slot></Row>
            <Row $gap={3}><Slot $w={16}><FillDownIcon /></Slot><ToolText>フィル</ToolText><Caret /></Row>
            <Row $gap={3}><Slot $w={16}><EraserIcon /></Slot><ToolText>クリア</ToolText><Caret /></Row>
          </Stack>
          <LargeButton $w={56} $mt={-3}>
            <SortIcon />
            <Squeeze $t={-0.6}>並べ替えと</Squeeze>
            <LabelCaret><Squeeze $t={-0.6}>フィルター</Squeeze><Caret /></LabelCaret>
          </LargeButton>
          <LargeButton $w={42} $mt={-3}>
            <FindIcon />
            <span>検索と</span>
            <LabelCaret>選択<Caret /></LabelCaret>
          </LargeButton>
        </GroupBody>
        <GroupLabel>編集</GroupLabel>
      </Group>

      <Collapse><CollapseIcon /></Collapse>
    </Ribbon>

    <FormulaBar>
      <NameBox>A4<Tri dir="d" /></NameBox>
      <Grip><i /><i /><i /></Grip>
      <FormulaButtons>
        <Slot $w={37}><CrossMark /></Slot>
        <Slot $w={37}><CheckMark /></Slot>
        <Slot $w={34}><FxMark>fx</FxMark></Slot>
      </FormulaButtons>
      <FormulaInput>2<Tri dir="d" c="#666" /></FormulaInput>
    </FormulaBar>

    <SheetArea>
      <SheetGrid>
        <ColumnHeaderRow>
          <Corner><CornerTriangle /></Corner>
          {COLUMNS.map(([name, w]) => (
            <ColumnHead key={name} $w={w} $sel={name === 'A'} $cut={name === 'N'}>{name}</ColumnHead>
          ))}
        </ColumnHeaderRow>
        {Array.from({ length: 18 }, (_, i) => i + 1).map(r => (
          <SheetRow key={r} $h={rowHeight(r)}>
            <RowHead $sel={r === 4} $dark={r > 1}>{r}</RowHead>
            {COLUMNS.map(([, w], c) => renderCell(r, c, w))}
          </SheetRow>
        ))}
      </SheetGrid>
      <VScroll>
        <ScrollButton><Tri dir="u" c="#666" /></ScrollButton>
        <VTrack><VThumb /></VTrack>
        <ScrollButton><Tri dir="d" c="#666" /></ScrollButton>
      </VScroll>
    </SheetArea>

    <SheetTabs>
      <TabNav><Tri dir="l" c="#c4c4c4" /><Tri dir="r" c="#c4c4c4" /></TabNav>
      <SheetTab>顧客名簿</SheetTab>
      <AddSheet><PlusCircle /></AddSheet>
      <HScrollWrap>
        <HGrip><i /><i /><i /></HGrip>
        <ScrollButton $h={14}><Tri dir="l" c="#666" /></ScrollButton>
        <HTrack><HThumb /></HTrack>
        <ScrollButton $h={14} $ml={2}><Tri dir="r" c="#666" /></ScrollButton>
      </HScrollWrap>
    </SheetTabs>

    <StatusBar>
      準備完了
      <Slot $w={14} $h={14} $ml={21}><MacroIcon /></Slot>
      <StatusRight>
        <ViewButton $on><NormalView /></ViewButton>
        <ViewButton><PageView /></ViewButton>
        <ViewButton><BreakView /></ViewButton>
        <Slot $w={14} $h={14}><SmallSign /></Slot>
        <ZoomSlider><ZoomThumb /></ZoomSlider>
        <Slot $w={14} $h={14}><SmallSign plus /></Slot>
        <ZoomText>100%</ZoomText>
      </StatusRight>
    </StatusBar>

    <Marker />
    <Callout $x={91} $y={324} $size={34}>①</Callout>
    <Callout $x={381} $y={367} $size={38}>②［Ctrl］＋［Shift］＋</Callout>
    <Callout $x={381} $y={422} $size={38}>［End］キーを押す</Callout>
  </Root>
);

export default App;
